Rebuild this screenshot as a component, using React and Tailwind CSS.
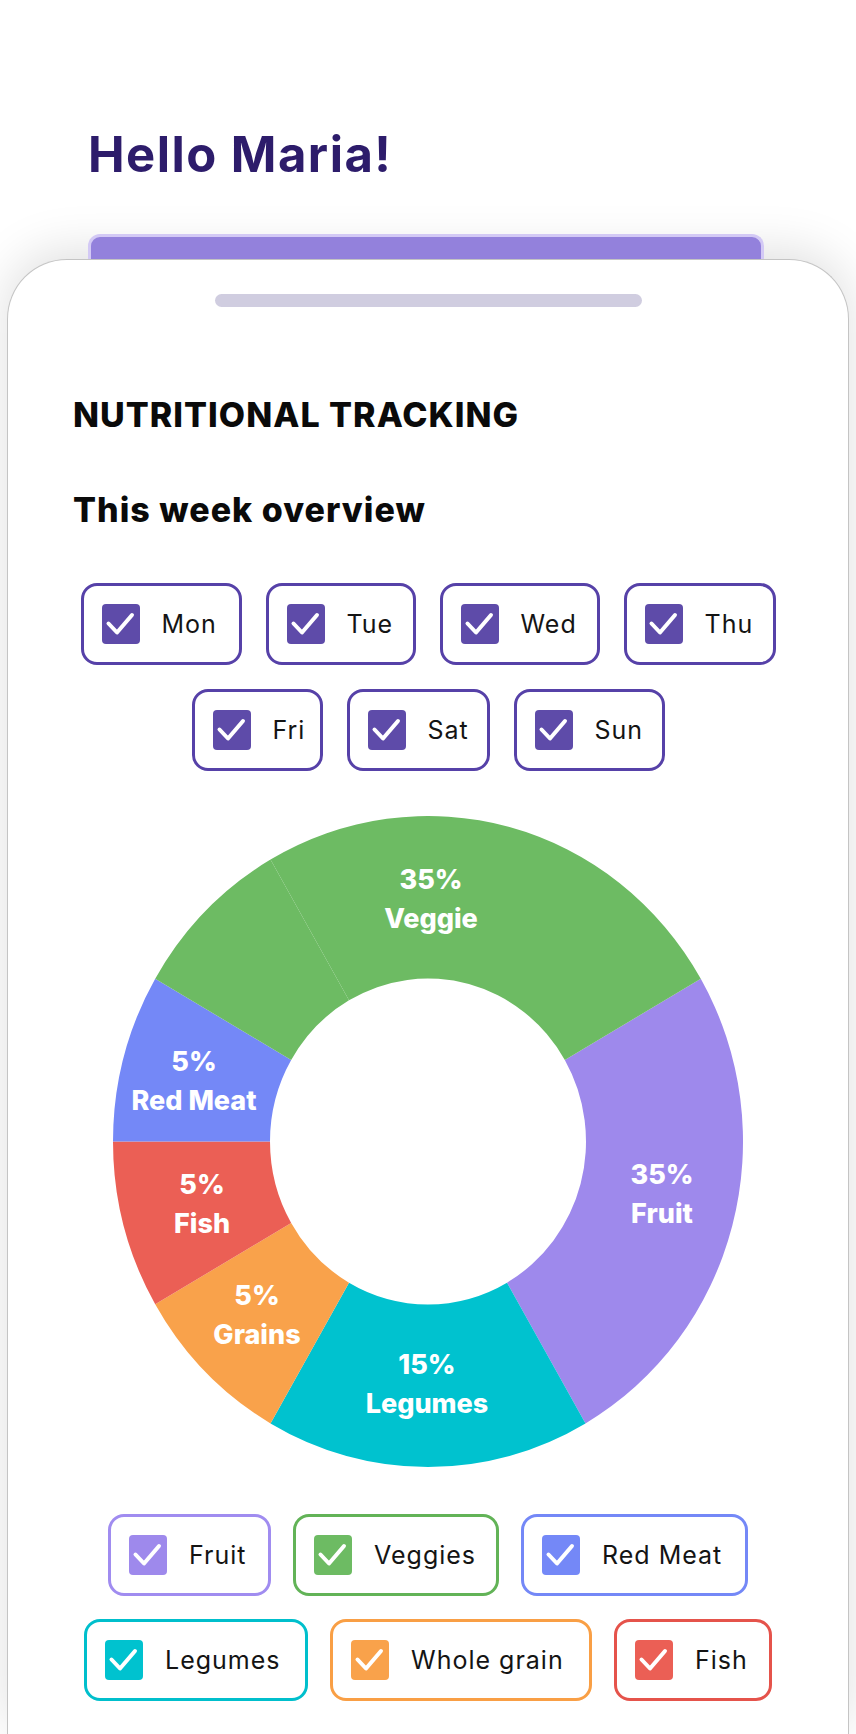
import React from 'react';

// Donut geometry (the picture is slightly taller than wide)
const CX = 315;
const CY = 325.5;
const RX = 315;
const RY = 325.5;
const IRX = 158;
const IRY = 163;

const pt = (deg, rx, ry) => {
  const a = (deg * Math.PI) / 180;
  return `${(CX + rx * Math.cos(a)).toFixed(2)} ${(CY + ry * Math.sin(a)).toFixed(2)}`;
};

const ring = (a0, a1) => {
  const large = a1 - a0 > 180 ? 1 : 0;
  return `M ${pt(a0, RX, RY)} A ${RX} ${RY} 0 ${large} 1 ${pt(a1, RX, RY)} L ${pt(a1, IRX, IRY)} A ${IRX} ${IRY} 0 ${large} 0 ${pt(a0, IRX, IRY)} Z`;
};

const segments = [
  { from: -30, to: 60, color: '#9e89ec' },
  { from: 60, to: 120, color: '#00c2cf' },
  { from: 120, to: 150, color: '#f9a24b' },
  { from: 150, to: 180, color: '#eb5f55' },
  { from: 180, to: 210, color: '#7488f7' },
  { from: 210, to: 240, color: '#6dbb63' },
  { from: 240, to: 330, color: '#6dbb63' },
];

const labels = [
  { x: 318, y: 73, pct: '35%', name: 'Veggie' },
  { x: 549, y: 368, pct: '35%', name: 'Fruit' },
  { x: 314, y: 558, pct: '15%', name: 'Legumes' },
  { x: 144, y: 489, pct: '5%', name: 'Grains' },
  { x: 89, y: 378, pct: '5%', name: 'Fish' },
  { x: 81, y: 255, pct: '5%', name: 'Red Meat' },
];

const days = [
  { label: 'Mon', w: 'w-[161px]' },
  { label: 'Tue', w: 'w-[150px]' },
  { label: 'Wed', w: 'w-[160px]' },
  { label: 'Thu', w: 'w-[152px]' },
  { label: 'Fri', w: 'w-[131px]' },
  { label: 'Sat', w: 'w-[143px]' },
  { label: 'Sun', w: 'w-[151px]' },
];

const legend = [
  { label: 'Fruit', w: 'w-[163px]', border: 'border-[#a08cf0]', box: 'bg-[#9e89ec]' },
  { label: 'Veggies', w: 'w-[206px]', border: 'border-[#62b357]', box: 'bg-[#6dbb63]' },
  { label: 'Red Meat', w: 'w-[227px]', border: 'border-[#7488f7]', box: 'bg-[#7488f7]' },
  { label: 'Legumes', w: 'w-[224px]', border: 'border-[#00bfcc]', box: 'bg-[#00c2cf]' },
  { label: 'Whole grain', w: 'w-[262px]', border: 'border-[#f99f45]', box: 'bg-[#f9a24b]' },
  { label: 'Fish', w: 'w-[158px]', border: 'border-[#e5534b]', box: 'bg-[#eb5f55]' },
];

const CheckBox = ({ className }) => (
  <span className={`flex h-[40px] w-[38px] shrink-0 items-center justify-center rounded-[4px] ${className}`}>
    <svg width="38" height="40" viewBox="0 0 38 40" fill="none">
      <polyline points="6.5,19.5 15,28.5 30,11" stroke="#fff" strokeWidth="4" strokeLinecap="round" strokeLinejoin="round" />
    </svg>
  </span>
);

const Chip = ({ label, w, border, box }) => (
  <div className={`flex h-[82px] items-center gap-[22px] rounded-[16px] border-[3px] bg-white pl-[18px] ${w} ${border}`}>
    <CheckBox className={box} />
    <span className="text-[25px] leading-none tracking-[0.04em] text-[#141414]">{label}</span>
  </div>
);

const Donut = () => (
  <svg width="630" height="651" viewBox="0 0 630 651" className="mx-auto block">
    {segments.map((s, i) => (
      <path key={i} d={ring(s.from, s.to)} fill={s.color} />
    ))}
    {labels.map((l) => (
      <g key={l.name} fill="#fff" fontWeight="800" fontSize="27" textAnchor="middle">
        <text x={l.x} y={l.y}>{l.pct}</text>
        <text x={l.x} y={l.y + 39}>{l.name}</text>
      </g>
    ))}
  </svg>
);

export default function App() {
  return (
    <div className="min-h-[1734px] w-full overflow-hidden bg-white font-['Inter',sans-serif]">
      <h1 className="pl-[88px] pt-[127px] text-[49px] font-bold leading-[56px] tracking-[0.03em] text-[#2d1c6b]">
        Hello Maria!
      </h1>

      <div className="relative z-10 ml-[88px] mt-[51px] h-[25px] w-[676px] rounded-t-[12px] border-[3px] border-b-0 border-[#d3c9f5] bg-[#9381dc]" />

      <div className="mx-[7px] min-h-[1475px] rounded-t-[60px] border border-b-0 border-[#c4c4c4] bg-white pb-[31px] shadow-[0_-8px_50px_rgba(0,0,0,0.13)]">
        <div className="mx-auto mt-[34px] h-[13px] w-[427px] rounded-full bg-[#d0cde0]" />

        <h2 className="mt-[88px] pl-[65px] text-[34px] font-extrabold leading-[40px] tracking-[0.03em] text-[#0a0a0a]">
          NUTRITIONAL TRACKING
        </h2>
        <h3 className="mt-[55px] pl-[65px] text-[34px] font-extrabold leading-[40px] tracking-[0.03em] text-[#0a0a0a]">
          This week overview
        </h3>

        <div className="mx-auto mt-[53px] flex w-[720px] flex-wrap justify-center gap-x-6 gap-y-[24px]">
          {days.map((d) => (
            <Chip key={d.label} label={d.label} w={d.w} border="border-[#5641a8]" box="bg-[#5e4ba9]" />
          ))}
        </div>

        <div className="mt-[45px]">
          <Donut />
        </div>

        <div className="mx-auto mt-[47px] flex w-[720px] flex-wrap justify-center gap-x-[22px] gap-y-[23px]">
          {legend.map((l) => (
            <Chip key={l.label} {...l} />
          ))}
        </div>
      </div>
    </div>
  );
}
